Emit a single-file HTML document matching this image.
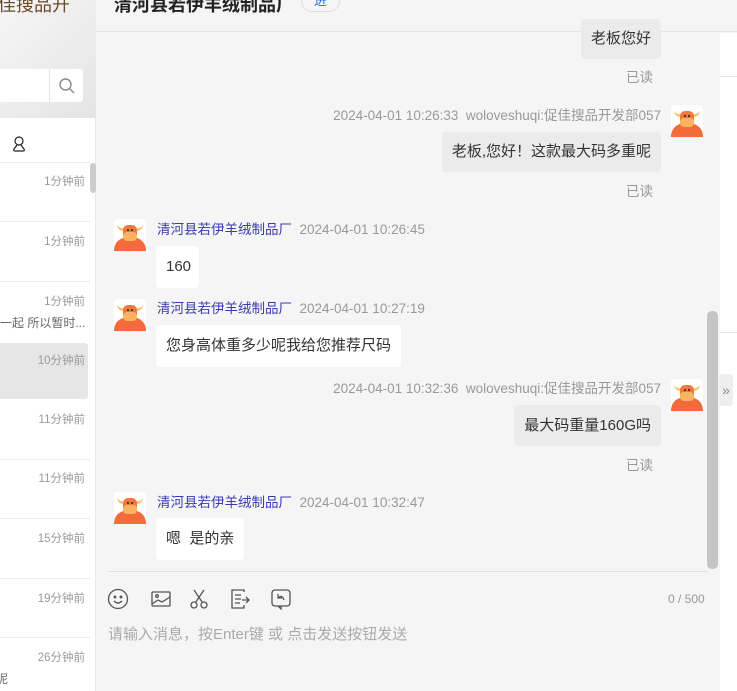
<!DOCTYPE html>
<html><head><meta charset="utf-8"><style>
*{margin:0;padding:0;box-sizing:border-box}
body{width:737px;height:691px;overflow:hidden;position:relative;background:#f5f5f5;font-family:"Liberation Sans","Noto Sans CJK SC",sans-serif;}
.a{position:absolute}
.left{left:0;top:0;width:96px;height:691px;background:#fff;border-right:1px solid #e8e8e8}
.ltop{left:0;top:0;width:96px;height:118px;background:linear-gradient(135deg,#f6f6f6,#e4e4e4)}
.time{right:652px;font-size:11.5px;color:#999;position:absolute;white-space:nowrap}
.sep{position:absolute;left:0;width:90px;height:1px;background:#ebebeb}
.bub{position:absolute;font-size:15px;color:#333;padding:0 10px;height:40px;line-height:40px;border-radius:4px;white-space:nowrap}
.me{background:#ebebeb}
.ot{background:#fff}
.meta{position:absolute;font-size:13.5px;color:#999;white-space:nowrap}
.nm{color:#3b3bb0}
.rd{position:absolute;font-size:13.5px;color:#999}
.av{position:absolute;width:32px;height:32px}
</style></head><body>
<svg width="0" height="0" style="position:absolute"><defs>
<symbol id="cow" viewBox="0 0 32 32"><rect width="32" height="32" rx="4" fill="#fff"/><path d="M0 32 C0 23 6 18 16 18 C26 18 32 23 32 32Z" fill="#f36b3b"/><path d="M3 6 Q4 12 10 12 L10 9 Q6 10 3 6Z M29 6 Q28 12 22 12 L22 9 Q26 10 29 6Z" fill="#f9c06a"/><rect x="9" y="6" width="14" height="14" rx="5" fill="#f5773f"/><rect x="9" y="13" width="14" height="9" rx="4" fill="#f9b45f"/><circle cx="14" cy="11" r="1" fill="#222"/><circle cx="18" cy="11" r="1" fill="#222"/></symbol>
</defs></svg>

<div class="a left"></div>
<div class="a ltop"></div>
<div class="a" style="left:-2px;top:-9px;font-size:18px;color:#6a4a2a">佳搜品开</div>
<div class="a" style="left:0;top:69px;width:83px;height:33px;background:#fff;border-radius:0 3px 3px 0"></div>
<div class="a" style="left:49px;top:69px;width:1px;height:33px;background:#e3e3e3"></div>
<svg class="a" style="left:58px;top:77px" width="18" height="18" viewBox="0 0 18 18"><circle cx="7.5" cy="7.5" r="5.5" fill="none" stroke="#888" stroke-width="1.4"/><line x1="11.5" y1="11.5" x2="16" y2="16" stroke="#888" stroke-width="1.4"/></svg>
<svg class="a" style="left:11px;top:135px" width="16" height="18" viewBox="0 0 16 18"><circle cx="8" cy="6" r="4" fill="none" stroke="#222" stroke-width="1.2"/><path d="M6 10 L3 14 Q2 16 4 16 L12 16 Q14 16 13 14 L10 10" fill="none" stroke="#222" stroke-width="1.2"/></svg>
<div class="sep" style="top:162px"></div>
<div class="a" style="left:90px;top:163px;width:6px;height:30px;background:#ccc;border-radius:3px"></div>
<div class="time" style="top:173px">1分钟前</div>
<div class="sep" style="top:221px"></div>
<div class="time" style="top:233px">1分钟前</div>
<div class="sep" style="top:281px"></div>
<div class="time" style="top:293px">1分钟前</div>
<div class="a" style="left:0;top:314px;font-size:12px;color:#666;white-space:nowrap">一起 所以暂时...</div>
<div class="a" style="left:0;top:343px;width:88px;height:56px;background:#e6e6e6;border-radius:0 3px 3px 0"></div>
<div class="time" style="top:352px">10分钟前</div>
<div class="time" style="top:411px">11分钟前</div>
<div class="sep" style="top:459px"></div>
<div class="time" style="top:470px">11分钟前</div>
<div class="sep" style="top:518px"></div>
<div class="time" style="top:530px">15分钟前</div>
<div class="sep" style="top:578px"></div>
<div class="time" style="top:590px">19分钟前</div>
<div class="sep" style="top:637px"></div>
<div class="time" style="top:649px">26分钟前</div>
<div class="a" style="left:-4px;top:670px;font-size:12px;color:#666">呢</div>

<div class="a" style="left:96px;top:0;width:641px;height:32px;background:#f5f5f5;border-bottom:1px solid #e3e3e3"></div>
<div class="a" style="left:114px;top:-9px;font-size:18px;font-weight:bold;color:#222">清河县若伊羊绒制品厂</div>
<div class="a" style="left:301px;top:-10px;width:39px;height:22px;border:1px solid #ddd;border-radius:11px;font-size:13px;color:#2a6ad8;text-align:center;line-height:20px">进</div>

<div class="a" style="left:720px;top:33px;width:17px;height:658px;background:#fff"></div>
<div class="a" style="left:720px;top:76px;width:17px;height:1px;background:#e8e8e8"></div>
<div class="a" style="left:720px;top:332px;width:17px;height:1px;background:#e8e8e8"></div>
<div class="a" style="left:719px;top:374px;width:14px;height:32px;background:#eee;border-radius:3px;font-size:14px;color:#888;text-align:center;line-height:32px">»</div>
<div class="a" style="left:707px;top:311px;width:11px;height:258px;background:#c4c4c4;border-radius:5px"></div>

<div class="bub me" style="right:76px;top:19px;height:40px">老板您好</div>
<div class="rd" style="left:626px;top:66px">已读</div>

<div class="meta" style="right:76px;top:104px">2024-04-01 10:26:33&nbsp;&nbsp;woloveshuqi:促佳搜品开发部057</div>
<svg class="av" style="left:671px;top:105px"><use href="#cow"/></svg>
<div class="bub me" style="right:76px;top:132px">老板,您好！这款最大码多重呢</div>
<div class="rd" style="left:626px;top:180px">已读</div>

<svg class="av" style="left:114px;top:219px"><use href="#cow"/></svg>
<div class="meta" style="left:157px;top:218px"><span class="nm">清河县若伊羊绒制品厂</span>&nbsp;&nbsp;2024-04-01 10:26:45</div>
<div class="bub ot" style="left:156px;top:246px;width:43px;height:42px;line-height:42px">160</div>

<svg class="av" style="left:114px;top:299px"><use href="#cow"/></svg>
<div class="meta" style="left:157px;top:297px"><span class="nm">清河县若伊羊绒制品厂</span>&nbsp;&nbsp;2024-04-01 10:27:19</div>
<div class="bub ot" style="left:156px;top:325px;height:42px;line-height:42px">您身高体重多少呢我给您推荐尺码</div>

<div class="meta" style="right:76px;top:377px">2024-04-01 10:32:36&nbsp;&nbsp;woloveshuqi:促佳搜品开发部057</div>
<svg class="av" style="left:671px;top:379px"><use href="#cow"/></svg>
<div class="bub me" style="right:76px;top:405px;height:41px;line-height:41px">最大码重量160G吗</div>
<div class="rd" style="left:626px;top:454px">已读</div>

<svg class="av" style="left:114px;top:492px"><use href="#cow"/></svg>
<div class="meta" style="left:157px;top:491px"><span class="nm">清河县若伊羊绒制品厂</span>&nbsp;&nbsp;2024-04-01 10:32:47</div>
<div class="bub ot" style="left:156px;top:518px;height:42px;line-height:42px">嗯&nbsp;&nbsp;是的亲</div>

<div class="a" style="left:108px;top:571px;width:599px;height:1px;background:#e0e0e0"></div>
<svg class="a" style="left:107px;top:588px" width="22" height="22" viewBox="0 0 22 22" fill="none" stroke="#555" stroke-width="1.3"><circle cx="11" cy="11" r="9.5"/><circle cx="8" cy="9" r=".8" fill="#555"/><circle cx="14" cy="9" r=".8" fill="#555"/><path d="M7 13 Q11 17 15 13"/></svg>
<svg class="a" style="left:150px;top:589px" width="22" height="20" viewBox="0 0 22 20" fill="none" stroke="#555" stroke-width="1.3"><rect x="2" y="3" width="18" height="14" rx="1"/><circle cx="7" cy="7" r="1.3"/><path d="M2 15 L8 11 L12 13 L20 8"/></svg>
<svg class="a" style="left:188px;top:588px" width="22" height="22" viewBox="0 0 22 22" fill="none" stroke="#555" stroke-width="1.3"><circle cx="6" cy="17" r="3"/><circle cx="16" cy="17" r="3"/><path d="M7.5 14.5 L16 2 M14.5 14.5 L6 2"/></svg>
<svg class="a" style="left:229px;top:588px" width="22" height="22" viewBox="0 0 22 22" fill="none" stroke="#555" stroke-width="1.3"><path d="M15 4 L15 2 L3 2 L3 20 L15 20 L15 17"/><path d="M6 7 H12 M6 11 H12 M6 15 H11 M13 12 H20 M17 9 L20 12 L17 15"/></svg>
<svg class="a" style="left:270px;top:588px" width="22" height="22" viewBox="0 0 22 22" fill="none" stroke="#555" stroke-width="1.3"><rect x="2" y="2" width="18" height="16" rx="3"/><path d="M8 18 L11 21 L11 18"/><path d="M8 6 L8 10 L12 10 M8 10 Q12 6 14 12"/></svg>
<div class="a" style="left:668px;top:592px;font-size:12px;color:#999">0 / 500</div>
<div class="a" style="left:108px;top:623px;font-size:15px;color:#aaa">请输入消息，按Enter键 或 点击发送按钮发送</div>
</body></html>
